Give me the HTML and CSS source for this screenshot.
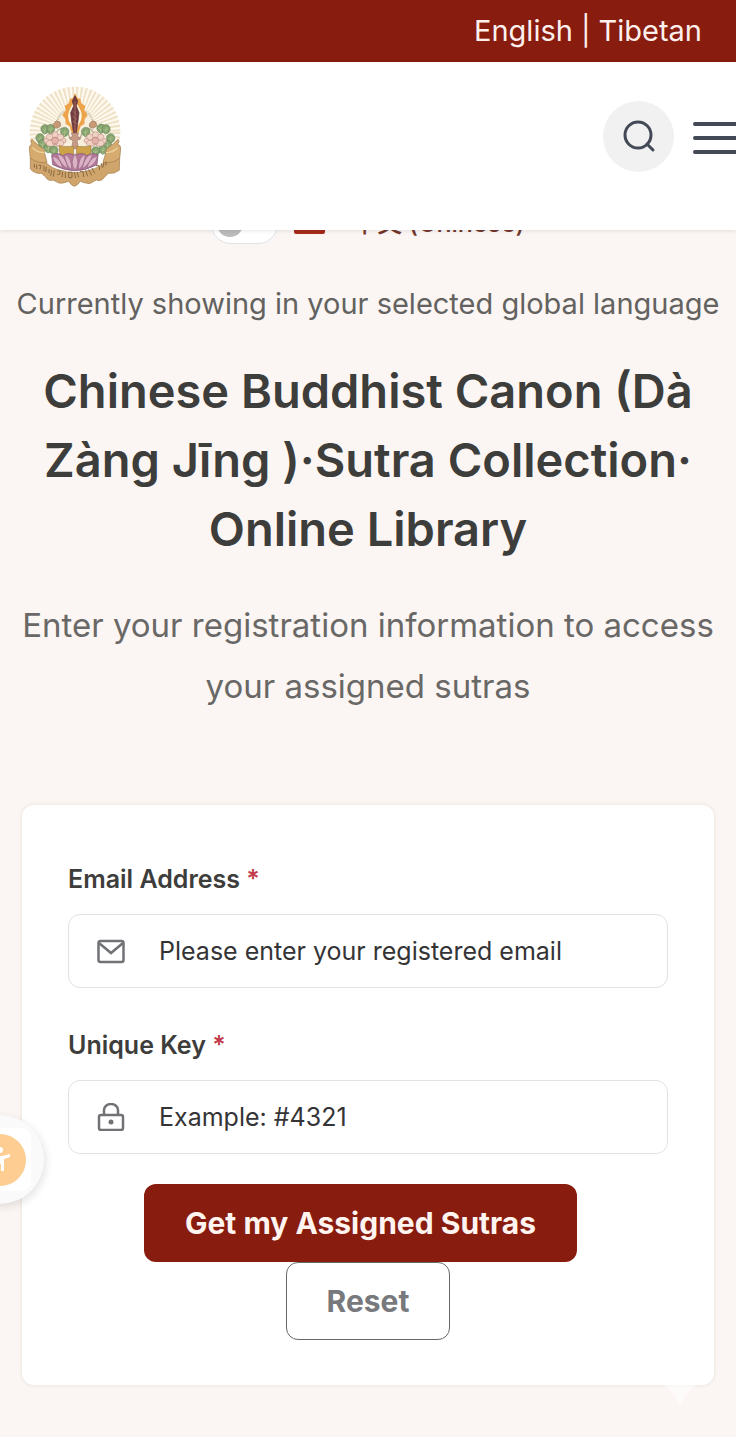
FILE: index.html
```html
<!DOCTYPE html>
<html lang="en">
<head>
<meta charset="utf-8">
<meta name="viewport" content="width=device-width, initial-scale=1">
<title>Chinese Buddhist Canon</title>
<link rel="stylesheet" href="styles.css">
</head>
<body>
<nav class="topbar" aria-label="Language">
  <a href="#en">English</a><span>|</span><a href="#bo">Tibetan</a>
</nav>
<header class="header">
  <a class="brand" href="#home" aria-label="Home">
    <svg class="logo" viewBox="50 40 285 315" aria-hidden="true">
      <defs>
        <clipPath id="halo"><path d="M50 40H335V230H50Z"/></clipPath>
        <g id="leaf"><path d="M0 14C-15 6-14-9-3-13C8-17 17-5 12 5Q9 12 0 14Z" fill="#86a56f" stroke="#66845a" stroke-width="2"/><path d="M0 12L2-7M1 3l7-5M1 4l-8-5" stroke="#b5c795" stroke-width="2" fill="none"/></g>
        <g id="flower" stroke="#b98078" stroke-width="1.5" fill="#f0d2c4">
          <ellipse cx="-22" cy="4" rx="12" ry="8" transform="rotate(25 -22 4)"/><ellipse cx="22" cy="4" rx="12" ry="8" transform="rotate(-25 22 4)"/>
          <ellipse cx="-15" cy="-9" rx="11" ry="9"/><ellipse cx="15" cy="-9" rx="11" ry="9"/><ellipse cx="0" cy="-15" rx="9" ry="10"/>
          <ellipse cx="-13" cy="10" rx="13" ry="9"/><ellipse cx="13" cy="10" rx="13" ry="9"/><ellipse cx="0" cy="2" rx="10" ry="11" fill="#e5b2aa"/><path d="M-7 17Q0 5 7 17M-10-2Q0-13 10-2" fill="none"/>
        </g>
      </defs>
      <g clip-path="url(#halo)"><circle cx="194" cy="184" r="136" fill="#fffaf0"/><circle cx="194" cy="184" r="68" fill="none" stroke="#efe2c8" stroke-width="136" stroke-dasharray="3.5 3.621"/></g>
      <path d="M120 224Q154 130 181 208M268 224Q234 130 207 208M130 220L111 176M258 220L277 176" fill="none" stroke="#b3ae90" stroke-width="4"/>
      <path d="M140 155Q145 130 165 121M248 155Q243 130 223 121" fill="none" stroke="#d2cbb0" stroke-width="7" stroke-dasharray="4 3"/>
      <path d="M194 67L201 82L210 84L213 98L225 106L222 119L232 133L223 145L222 160L211 167L205 184L194 193L183 184L178 167L166 160L165 145L156 133L166 119L163 106L175 98L179 84L188 82Z" fill="#eda34a"/>
      <path d="M194 91C207 111 221 128 211 151L194 184L176 151C168 128 181 110 194 91Z" fill="#fff4dc"/>
      <path d="M194 75L202 91L198 106L206 126L202 160L198 187H190L185 160L181 126L190 106L186 91Z" fill="#713c40" stroke="#5c3034" stroke-width="2"/>
      <path d="M194 91V184M187 122L199 132M187 136L200 146M188 151L199 159" stroke="#a76961" stroke-width="3"/>
      <path d="M183 187H205L201 197L211 202L200 210L204 234H184L188 210L177 202L187 197Z" fill="#c79a83" stroke="#9d786b" stroke-width="2"/>
      <use href="#leaf" x="103" y="176"/><use href="#leaf" x="120" y="175"/><use href="#leaf" x="162" y="184"/><use href="#leaf" x="88" y="203"/><use href="#leaf" x="96" y="220"/><use href="#leaf" x="113" y="233"/><use href="#leaf" x="130" y="240"/>
      <use href="#leaf" x="271" y="174"/><use href="#leaf" x="286" y="176"/><use href="#leaf" x="225" y="184"/><use href="#leaf" x="300" y="203"/><use href="#leaf" x="290" y="223"/><use href="#leaf" x="277" y="237"/><use href="#leaf" x="255" y="242"/>
      <path d="M129 160l9-10 11 4 2 12-11 7-10-4ZM237 160l9-10 11 4 2 12-11 7-10-4Z" fill="#c69b73" stroke="#9c765d" stroke-width="2"/>
      <use href="#flower" x="134" y="208"/><use href="#flower" x="255" y="208"/>
      <path d="M146 225Q165 230 190 227V255H149ZM198 227Q221 230 242 225V254H198Z" fill="#cda248" stroke="#a07f47" stroke-width="2"/>
      <path d="M124 253Q142 243 157 255Q174 242 193 255Q213 242 230 255Q246 244 263 253L260 282Q195 318 127 282Z" fill="#b77998" stroke="#7c5274" stroke-width="2"/>
      <g fill="#dcb3c4" stroke="#94678a" stroke-width="2"><path d="M125 257Q150 260 157 292Q133 285 125 257ZM262 257Q237 260 230 292Q254 285 262 257ZM141 250Q165 253 173 295Q149 281 141 250ZM247 250Q223 253 215 295Q239 281 247 250ZM163 251Q184 258 184 298Q165 284 163 251ZM225 251Q204 258 204 298Q223 284 225 251ZM194 249Q211 276 194 299Q177 276 194 249Z"/></g>
      <path d="M65 220Q57 212 65 206Q73 215 87 226Q106 236 103 248L110 274L100 289Q77 277 60 263L57 235Q56 224 65 220ZM322 220Q330 212 323 206Q315 216 300 226Q284 235 286 248L278 274L289 289Q312 277 328 263L331 235Q332 224 322 220Z" fill="#d6ab70" stroke="#a07c4a" stroke-width="2"/>
      <path d="M66 231Q83 246 102 246M322 231Q306 246 287 246" fill="none" stroke="#ecd09a" stroke-width="4"/>
      <path d="M60 262Q79 278 107 276Q125 294 151 299Q194 312 237 299Q263 293 281 276Q310 278 328 262L327 299Q312 310 294 308L281 321Q272 334 258 328L238 339Q220 337 210 332Q201 345 192 347Q183 345 175 332Q155 340 146 337L128 328Q114 333 106 319L93 308Q73 310 60 295Z" fill="#d0a56c" stroke="#a07a4a" stroke-width="2"/>
      <path d="M72 280v11m7-9v13m6-11h7l-3 12m12-11v16m7-12l-2 15m11-9l-2 12m9-9l-3 18m11-17l-3 19m12-17h9l-2 10h-8m17-7l-2 16m10-15v17m10-17h10v16h-10zm17 0l4 17m4-18l5 16m4-18h9l2 17m6-20l6 18m3-21l9 18m1-22l8 16m4-23h9l2 13m5-20l3 14m4-17v13m7-16v12" fill="none" stroke="#8a6a40" stroke-width="3"/>
    </svg>
  </a>
  <div class="actions">
    <button class="search" type="button" aria-label="Search"><svg viewBox="0 0 36 36" aria-hidden="true"><circle cx="17" cy="17" r="13"/><path d="M26 26L32 32"/></svg></button>
    <button class="menu" type="button" aria-label="Menu"><i></i><i></i><i></i></button>
  </div>
</header>
<main class="main">
  <div class="language">
    <input class="switch" id="zh" type="checkbox" role="switch">
    <label for="zh"><span class="flag"></span><span>中文 (Chinese)</span></label>
  </div>
  <p class="status">Currently showing in your selected global language</p>
  <h1 class="title">Chinese Buddhist Canon (Dà Zàng Jīng )·Sutra Collection·<br>Online Library</h1>
  <p class="intro">Enter your registration information to access your assigned sutras</p>
  <form class="card">
    <label class="label" for="email">Email Address <span>*</span></label>
    <div class="field">
      <svg viewBox="0 0 28 28" aria-hidden="true"><rect x="1.5" y="4" width="25" height="21" rx="2"/><path d="M2 6L14 16L26 6"/></svg>
      <input id="email" type="email" placeholder="Please enter your registered email">
    </div>
    <label class="label" for="key">Unique Key <span>*</span></label>
    <div class="field">
      <svg viewBox="0 0 28 28" aria-hidden="true"><rect x="2" y="12" width="24" height="15" rx="2"/><path d="M7 12V7A7 6 0 0 1 21 7V12"/><circle class="dot" cx="14" cy="19" r="2.5"/></svg>
      <input id="key" type="text" placeholder="Example: #4321">
    </div>
    <div class="buttons">
      <button class="primary" type="submit">Get my Assigned Sutras</button>
      <button class="reset" type="reset">Reset</button>
    </div>
    <svg class="spark" viewBox="0 0 50 50" aria-hidden="true"><path d="M25 0Q29 21 50 25Q34 29 25 50Q16 29 0 25Q21 21 25 0Z"/></svg>
  </form>
</main>
<button class="access" type="button" aria-label="Accessibility options"><span class="tile"><span class="disc"><svg viewBox="0 0 28 28" aria-hidden="true"><circle cx="14" cy="4" r="3"/><path d="M4 8L12 10H16L24 8V11L18 13V25H15V18H13V25H10V13L4 11Z"/></svg></span></span></button>
</body>
</html>
```
FILE: styles.css
```css
* { box-sizing: border-box; }
body { margin: 0; background: #fbf6f3; color: #3d3d3b; font-family: Inter, "Noto Sans CJK SC", sans-serif; overflow-x: hidden; }
button, input { font: inherit; }
.topbar { display: flex; justify-content: flex-end; align-items: center; gap: 8px; height: 62px; padding: 0 34px 2px; background: #881c0e; color: #fdf0ec; font-size: 29px; }
.topbar a { color: inherit; text-decoration: none; }
.header { position: relative; z-index: 2; display: flex; align-items: center; justify-content: space-between; height: 168px; padding: 0 0 20px 27px; background: #fff; box-shadow: 0 1px 4px #0000001a; }
.brand, .logo { display: block; }
.logo { width: 95px; height: 105px; }
.actions { display: flex; align-items: center; gap: 19px; }
.search { display: grid; place-items: center; width: 71px; height: 71px; padding: 0; border: 0; border-radius: 50%; background: #f1f1f1; }
.search svg { width: 36px; height: 36px; fill: none; stroke: #434955; stroke-width: 3; stroke-linecap: round; }
.menu { display: grid; gap: 10px; width: 43px; padding: 4px 0 0; border: 0; background: none; }
.menu i { height: 4px; border-radius: 2px 0 0 2px; background: #434955; }
.language { display: flex; align-items: center; justify-content: center; gap: 16px; height: 40px; margin-top: -26px; color: #74382d; font-size: 25px; line-height: 32px; font-weight: 500; }
.language label { display: flex; align-items: center; gap: 27px; padding-bottom: 2px; }
.switch { appearance: none; display: flex; align-items: center; width: 67px; height: 40px; margin: 0; padding: 0 5px; border: 1px solid #dfe2e8; border-radius: 20px; background: #fff; }
.switch::before { content: ""; width: 26px; height: 26px; border-radius: 50%; background: #bcbcbc; }
.flag { width: 31px; height: 21px; border-radius: 2px; background: #a62b1b; }
.main { padding: 0 8px 52px; }
.status { margin: 40px 0 0; font-size: 29px; line-height: 40px; text-align: center; color: #636260; }
.title { margin: 32px 0 0; font-size: 47px; line-height: 69px; font-weight: 600; text-align: center; }
.intro { margin: 32px 0 0; font-size: 33px; line-height: 61px; text-align: center; color: #696866; }
.card { position: relative; margin: 88px 14px 0; padding: 53px 46px 45px; border-radius: 12px; background: #fff; box-shadow: 0 0 4px #5a32281f; }
.label { display: block; margin-bottom: 14px; font-size: 25px; line-height: 42px; font-weight: 600; }
.label span { color: #c23c4c; }
.field { display: flex; align-items: center; gap: 34px; height: 74px; margin-bottom: 36px; padding: 0 28px; border: 1px solid #e2e2e2; border-radius: 12px; }
.field svg { flex: none; width: 28px; height: 28px; fill: none; stroke: #707276; stroke-width: 2.5; }
.field .dot { fill: #707276; stroke: none; }
.field input { flex: 1; min-width: 0; padding: 0; border: 0; outline: 0; background: none; font-size: 25px; color: #343436; }
.field input::placeholder { color: #343436; opacity: 1; }
.buttons { display: flex; flex-direction: column; align-items: center; margin-top: -6px; }
.primary, .reset { height: 78px; border-radius: 12px; font-weight: 700; font-size: 30px; }
.primary { margin-right: 15px; padding: 0 41px; border: 0; background: #881c0e; color: #fff4f0; }
.reset { padding: 0 40px; border: 1px solid #66686b; background: #fff; color: #77797c; }
.spark { position: absolute; right: 9px; bottom: -21px; width: 50px; height: 50px; fill: #fff; opacity: .6; }
.access { position: absolute; left: -45px; top: 1115px; display: grid; place-items: center; width: 89px; height: 89px; padding: 0; border: 0; border-radius: 50%; background: #fbfafa; box-shadow: 2px 3px 8px #0000001c; }
.tile { display: grid; place-items: center; width: 63px; height: 63px; border-radius: 10px; background: #fff; }
.disc { display: grid; place-items: center; width: 52px; height: 52px; border-radius: 50%; background: #fdcd91; }
.disc svg { width: 28px; height: 28px; fill: #fff; }
```
